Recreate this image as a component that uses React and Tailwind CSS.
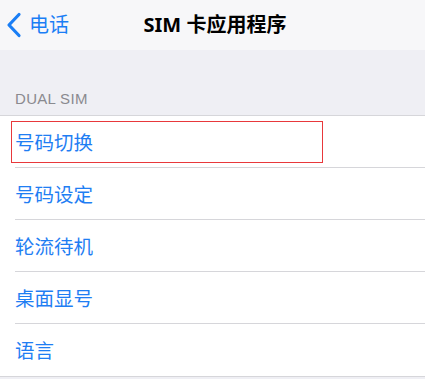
import React from "react";

const rows = ["号码切换", "号码设定", "轮流待机", "桌面显号", "语言"];

export default function App() {
    return (
        <div className="w-[425px] h-[379px] overflow-hidden bg-[#efeff4]" style={{ fontFamily: '"Noto Sans", "Noto Sans CJK SC", sans-serif' }}>
            <div className="h-[50px] bg-[#f7f7f9] relative flex items-center">
                <div className="flex items-center pl-[5px] text-[#1a7ef5]">
                    <svg width="18" height="26" viewBox="0 0 18 26" fill="none">
                        <path d="M14 2.5 L4 13 L14 23.5" stroke="#1a7ef5" strokeWidth="3.2" strokeLinecap="round" strokeLinejoin="round" />
                    </svg>
                    <span className="ml-[6px] text-[20px] leading-none">电话</span>
                </div>
                <div className="absolute inset-0 flex items-center justify-center pointer-events-none">
                    <span className="text-[20px] font-bold text-black leading-none ml-[5px]">SIM 卡应用程序</span>
                </div>
            </div>

            <div className="h-[65px] flex items-end pl-[15px] pb-[9px]">
                <span className="text-[15px] text-[#8a8a8f] tracking-[0.3px] leading-none" style={{ fontFamily: '"Liberation Sans", sans-serif' }}>DUAL SIM</span>
            </div>

            <div className="bg-white border-t border-b border-[#d6d6da]">
                {rows.map((r, i) => (
                    <div key={r} className="pl-[15px] relative">
                        <div className={"h-[52px] flex items-center pt-[2px] text-[19.5px] text-[#1f7ef3] " + (i < rows.length - 1 ? "border-b border-[#d6d6da]" : "")}>
                            {r}
                        </div>
                        {i === 0 && (
                            <div className="absolute left-[11px] top-[5px] w-[312px] h-[42px] border border-[#e8383b]" />
                        )}
                    </div>
                ))}
            </div>
        </div>
    );
}
